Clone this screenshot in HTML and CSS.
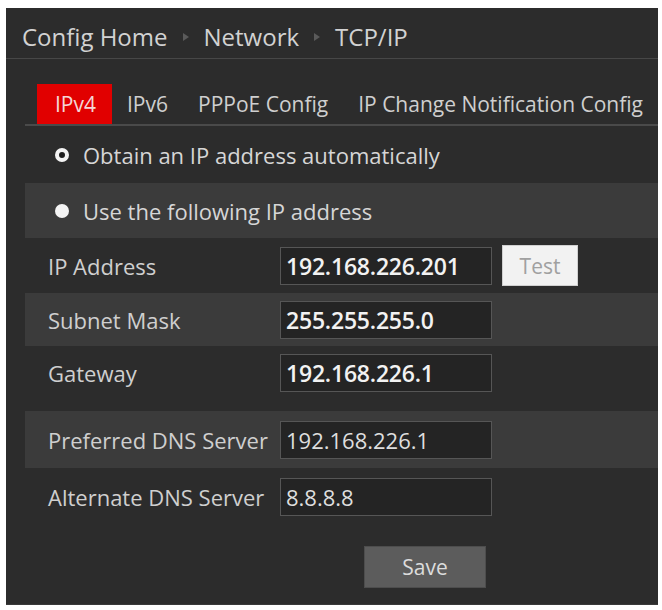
FILE: index.html
```html
<!DOCTYPE html>
<html lang="en">
<head>
<meta charset="utf-8">
<title>TCP/IP</title>
<link rel="stylesheet" href="styles.css">
</head>
<body>
<div class="panel">
  <div class="crumbs">
    <span>Config Home</span><span class="sep"></span><span>Network</span><span class="sep"></span><span>TCP/IP</span>
  </div>
  <div class="content">
    <div class="tabs">
      <span class="tab active">IPv4</span>
      <span class="tab">IPv6</span>
      <span class="tab">PPPoE Config</span>
      <span class="tab">IP Change Notification Config</span>
    </div>
    <div class="row radio-row first">
      <span class="radio checked"></span><span>Obtain an IP address automatically</span>
    </div>
    <div class="row radio-row band">
      <span class="radio"></span><span>Use the following IP address</span>
    </div>
    <div class="row field ip">
      <span class="label">IP Address</span>
      <span class="input">192.168.226.201</span>
      <span class="test">Test</span>
    </div>
    <div class="row field band mask">
      <span class="label">Subnet Mask</span>
      <span class="input">255.255.255.0</span>
    </div>
    <div class="row field gateway">
      <span class="label">Gateway</span>
      <span class="input">192.168.226.1</span>
    </div>
    <div class="row field band dns1">
      <span class="label">Preferred DNS Server</span>
      <span class="input thin">192.168.226.1</span>
    </div>
    <div class="row field dns2">
      <span class="label">Alternate DNS Server</span>
      <span class="input thin">8.8.8.8</span>
    </div>
    <div class="actions">
      <span class="save">Save</span>
    </div>
  </div>
</div>
</body>
</html>
```
FILE: styles.css
```css
body {
  margin: 0;
  background: #ffffff;
  font-family: "Open Sans", "Noto Sans", sans-serif;
}
.panel {
  margin: 8px 4px 0 6px;
  height: 597px;
  background: #2c2c2c;
  color: #cfcfcf;
  box-sizing: border-box;
  border-bottom: 1px solid #3a3a3a;
}
.crumbs {
  height: 51px;
  box-sizing: border-box;
  padding-top: 7px;
  border-bottom: 1px solid #474747;
  display: flex;
  align-items: center;
  padding-left: 16px;
  font-size: 24px;
  color: #d2d2d2;
}
.sep {
  width: 0;
  height: 0;
  border-left: 6px solid #5a5a5a;
  border-top: 4px solid transparent;
  border-bottom: 4px solid transparent;
  margin: 0 15px 0 15px;
}
.content {
  padding-left: 19px;
}
.tabs {
  margin-top: 25px;
  display: flex;
  padding-left: 12px;
  border-bottom: 2px solid #4a4a4a;
  font-size: 21px;
}
.tab {
  height: 40px;
  padding: 0 15px;
  display: flex;
  align-items: center;
  color: #cfcfcf;
  white-space: nowrap;
}
.tab.active {
  background: #e10000;
  color: #f4d6d6;
  padding: 0 16px 0 18px;
}
.row {
  display: flex;
  align-items: center;
}
.band {
  background: #3b3b3b;
}
.radio-row {
  height: 55px;
  padding-left: 30px;
  font-size: 22px;
  color: #d6d6d6;
}
.radio-row.first {
  height: 57px;
}
.radio {
  width: 14px;
  height: 14px;
  border-radius: 50%;
  background: #f4f4f4;
  margin-right: 14px;
  box-sizing: border-box;
}
.radio.checked {
  border: 4px solid #f4f4f4;
  background: #1e1e1e;
}
.field {
  padding-left: 23px;
  font-size: 22px;
  color: #cfcfcf;
}
.label {
  width: 232px;
  flex: none;
  white-space: nowrap;
}
.input {
  width: 212px;
  height: 38px;
  box-sizing: border-box;
  border: 1px solid #565656;
  background: #242424;
  color: #f2f2f2;
  font-size: 23px;
  letter-spacing: -0.2px;
  padding-left: 5px;
  display: flex;
  align-items: center;
  font-weight: 600;
}
.input.thin {
  font-weight: 400;
  font-size: 22px;
  letter-spacing: 0;
  color: #dedede;
}
.ip {
  height: 55px;
}
.test {
  margin-left: 10px;
  width: 76px;
  height: 41px;
  box-sizing: border-box;
  background: #f2f2f2;
  border: 1px solid #d0d0d0;
  color: #a0a0a0;
  font-size: 21px;
  display: flex;
  align-items: center;
  justify-content: center;
}
.mask {
  height: 53px;
}
.gateway {
  height: 65px;
  padding-top: 8px;
  padding-bottom: 19px;
  box-sizing: border-box;
}
.dns1 {
  height: 57px;
}
.dns2 {
  height: 57px;
}
.actions {
  padding-left: 339px;
  padding-top: 21px;
}
.save {
  width: 122px;
  height: 42px;
  background: #5c5c5c;
  border: 1px solid #4d4d4d;
  box-sizing: border-box;
  color: #dcdcdc;
  font-size: 21px;
  display: flex;
  align-items: center;
  justify-content: center;
}
```
